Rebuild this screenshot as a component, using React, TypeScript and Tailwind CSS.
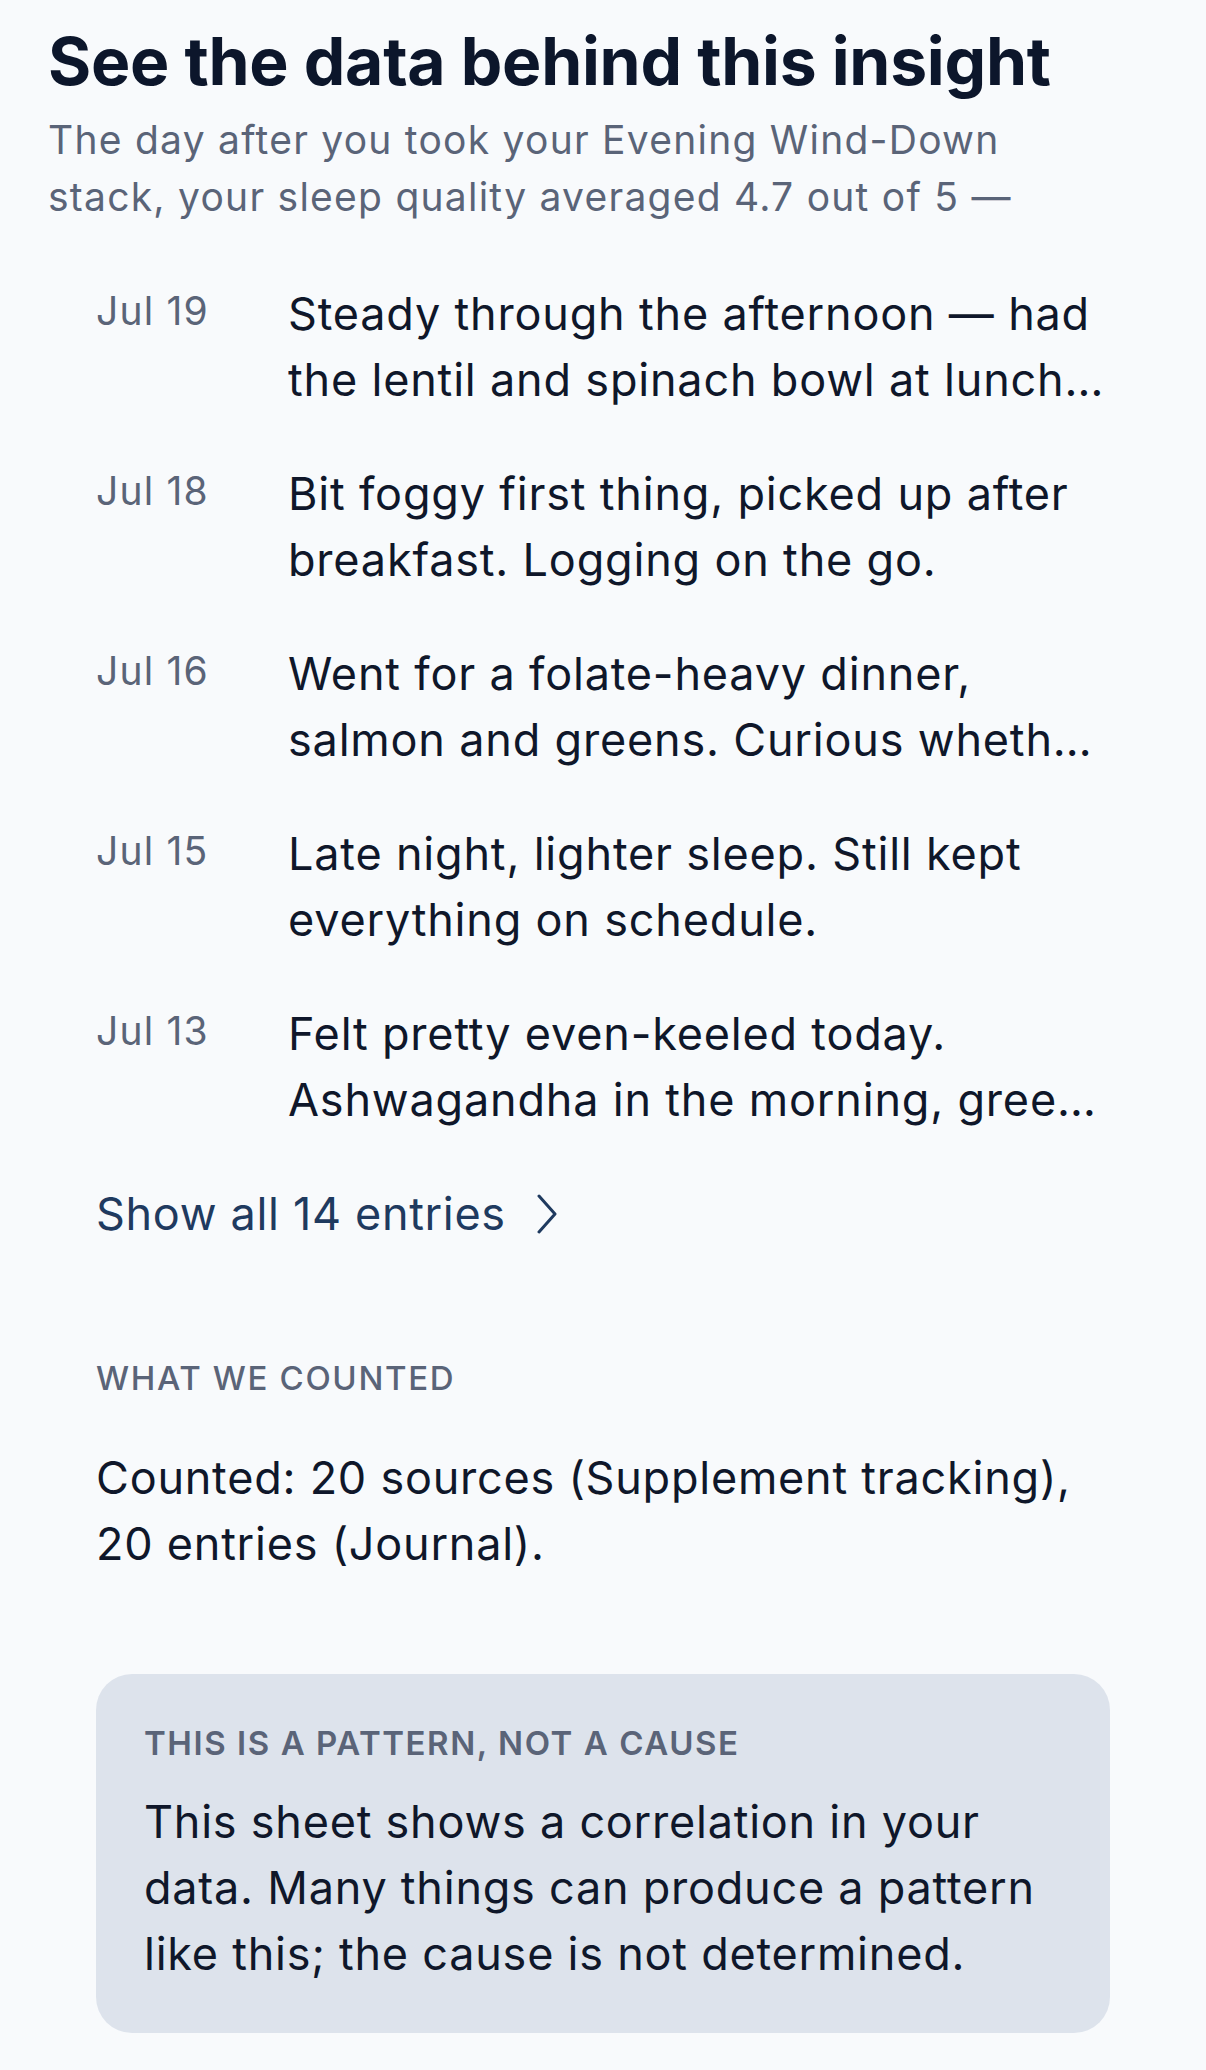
import React from 'react';

type Entry = { date: string; text: string };

const entries: Entry[] = [
  { date: 'Jul 19', text: 'Steady through the afternoon — had the lentil and spinach bowl at lunch…' },
  { date: 'Jul 18', text: 'Bit foggy first thing, picked up after breakfast. Logging on the go.' },
  { date: 'Jul 16', text: 'Went for a folate-heavy dinner, salmon and greens. Curious wheth…' },
  { date: 'Jul 15', text: 'Late night, lighter sleep. Still kept everything on schedule.' },
  { date: 'Jul 13', text: 'Felt pretty even-keeled today. Ashwagandha in the morning, gree…' },
];

const Chevron: React.FC = () => (
  <svg width="22" height="40" viewBox="0 0 22 40" fill="none" className="shrink-0">
    <path d="M3 2 L19 20 L3 38" stroke="#1f3a5f" strokeWidth="3" strokeLinecap="round" strokeLinejoin="round" />
  </svg>
);

const InsightData: React.FC = () => {
  return (
    <div className="min-h-[2070px] w-[1206px] bg-[#f8fafc] px-[48px] pt-[22px] pb-[35px] font-['Inter',sans-serif] text-[#0f172a]">
      {/* Header */}
      <h1 className="text-[66px] font-bold leading-[79px] tracking-[-0.004em] text-[#0c162b]">
        See the data behind this insight
      </h1>
      <p className="mt-[10px] max-w-[1000px] text-[39px] leading-[57px] tracking-[0.032em] text-[#5a6478]">
        The day after you took your Evening Wind-Down stack, your sleep quality averaged 4.7 out of 5 —
      </p>

      <div className="px-[48px]">
        {/* Journal entries */}
        <ul className="mt-[56px] flex flex-col gap-[48px]">
          {entries.map((e) => (
            <li key={e.date} className="flex items-start">
              <span className="w-[192px] shrink-0 pt-[3px] text-[39px] leading-[54px] tracking-[0.03em] text-[#5a6478]">{e.date}</span>
              <p className="line-clamp-2 text-[45px] leading-[66px] tracking-[0.018em]">{e.text}</p>
            </li>
          ))}
        </ul>

        <button className="mt-[48px] flex items-center gap-[30px] text-[45px] leading-[66px] tracking-[0.015em] text-[#1f3a5f]">
          <span>Show all 14 entries</span>
          <Chevron />
        </button>

        {/* Counted sources */}
        <h3 className="mt-[110px] text-[33px] font-medium leading-[42px] tracking-[0.05em] text-[#5a6478]">
          WHAT WE COUNTED
        </h3>
        <p className="mt-[46px] text-[45px] leading-[66px] tracking-[0.017em]">
          Counted: 20 sources (Supplement tracking), 20 entries (Journal).
        </p>

        {/* Disclaimer */}
        <div className="mt-[97px] rounded-[36px] bg-[#dde3ec] px-[48px] pt-[48px] pb-[46px]">
          <h4 className="text-[33px] font-semibold leading-[42px] tracking-[0.047em] text-[#5a6478]">
            THIS IS A PATTERN, NOT A CAUSE
          </h4>
          <p className="mt-[25px] text-[45px] leading-[66px] tracking-[0.017em]">
            This sheet shows a correlation in your data. Many things can produce a pattern like this; the cause is not determined.
          </p>
        </div>
      </div>
    </div>
  );
};

export default function App() {
  return <InsightData />;
}
